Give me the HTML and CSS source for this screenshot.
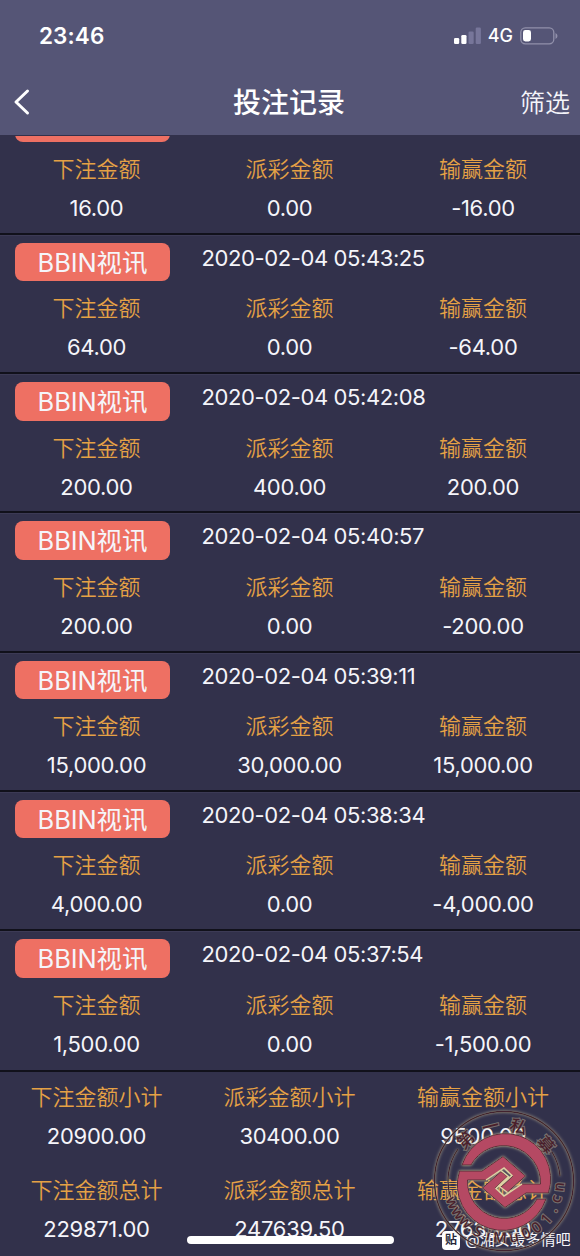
FILE: index.html
```html
<!DOCTYPE html>
<html lang="zh-CN">
<head>
<meta charset="utf-8">
<title>投注记录</title>
<link rel="stylesheet" href="styles.css">
</head>
<body>
<div class="screen">
  <header class="header">
    <div class="status">
      <span class="clock">23:46</span>
      <div class="indicators">
        <svg class="signal" width="28" height="18" viewBox="0 0 28 18"><rect x="0" y="11" width="5.2" height="6" rx="1.3" fill="#fff"/><rect x="7.3" y="8" width="5.2" height="9" rx="1.3" fill="#fff"/><rect x="14.5" y="4.5" width="5.2" height="12.5" rx="1.3" fill="#77769a"/><rect x="21.7" y="0.5" width="5.2" height="16.5" rx="1.3" fill="#77769a"/></svg>
        <span class="network">4G</span>
        <svg class="battery" width="38" height="18" viewBox="0 0 38 18"><rect x=".8" y=".8" width="33" height="16" rx="4.5" fill="none" stroke="#9190aa" stroke-width="1.3"/><rect x="3" y="3" width="8" height="11.5" rx="2.4" fill="#fff"/><path d="M35.5 6v6q2-1 2-3t-2-3z" fill="#9190aa"/></svg>
      </div>
    </div>
    <nav class="nav">
      <svg class="back" width="18" height="30" viewBox="0 0 18 30"><path d="M15.500 5 4 16l11.500 11" fill="none" stroke="#fff" stroke-width="3" stroke-linecap="round" stroke-linejoin="round"/></svg>
      <h1 class="title">投注记录</h1>
      <span class="filter">筛选</span>
    </nav>
  </header>
  <main class="list">
    <section class="record clipped">
      <div class="record-head"><span class="tag"></span></div>
      <div class="labels"><span>下注金额</span><span>派彩金额</span><span>输赢金额</span></div>
      <div class="values"><span>16.00</span><span>0.00</span><span>-16.00</span></div>
    </section>
    <section class="record">
      <div class="record-head"><span class="tag">BBIN视讯</span><time class="time">2020-02-04 05:43:25</time></div>
      <div class="labels"><span>下注金额</span><span>派彩金额</span><span>输赢金额</span></div>
      <div class="values"><span>64.00</span><span>0.00</span><span>-64.00</span></div>
    </section>
    <section class="record">
      <div class="record-head"><span class="tag">BBIN视讯</span><time class="time">2020-02-04 05:42:08</time></div>
      <div class="labels"><span>下注金额</span><span>派彩金额</span><span>输赢金额</span></div>
      <div class="values"><span>200.00</span><span>400.00</span><span>200.00</span></div>
    </section>
    <section class="record">
      <div class="record-head"><span class="tag">BBIN视讯</span><time class="time">2020-02-04 05:40:57</time></div>
      <div class="labels"><span>下注金额</span><span>派彩金额</span><span>输赢金额</span></div>
      <div class="values"><span>200.00</span><span>0.00</span><span>-200.00</span></div>
    </section>
    <section class="record">
      <div class="record-head"><span class="tag">BBIN视讯</span><time class="time">2020-02-04 05:39:11</time></div>
      <div class="labels"><span>下注金额</span><span>派彩金额</span><span>输赢金额</span></div>
      <div class="values"><span>15,000.00</span><span>30,000.00</span><span>15,000.00</span></div>
    </section>
    <section class="record">
      <div class="record-head"><span class="tag">BBIN视讯</span><time class="time">2020-02-04 05:38:34</time></div>
      <div class="labels"><span>下注金额</span><span>派彩金额</span><span>输赢金额</span></div>
      <div class="values"><span>4,000.00</span><span>0.00</span><span>-4,000.00</span></div>
    </section>
    <section class="record">
      <div class="record-head"><span class="tag">BBIN视讯</span><time class="time">2020-02-04 05:37:54</time></div>
      <div class="labels"><span>下注金额</span><span>派彩金额</span><span>输赢金额</span></div>
      <div class="values"><span>1,500.00</span><span>0.00</span><span>-1,500.00</span></div>
    </section>
  </main>
  <footer class="summary">
    <div class="total">
      <div class="labels"><span>下注金额小计</span><span>派彩金额小计</span><span>输赢金额小计</span></div>
      <div class="values"><span>20900.00</span><span>30400.00</span><span>9500.00</span></div>
    </div>
    <div class="total">
      <div class="labels"><span>下注金额总计</span><span>派彩金额总计</span><span>输赢金额总计</span></div>
      <div class="values"><span>229871.00</span><span>247639.50</span><span>27635.50</span></div>
    </div>
  </footer>
  <div class="home-bar"></div>
  <div class="credit"><span class="credit-icon">贴</span><span>@湘女最多情吧</span></div>
  <svg class="seal" width="150" height="150" viewBox="-75 -75 150 150">
    <defs>
      <filter id="glow" x="-20%" y="-20%" width="140%" height="140%"><feDropShadow dx="0" dy="0" stdDeviation="1.5" flood-color="#d8cba4" flood-opacity=".85"/></filter>
      <path id="half" d="M-44.500-11H-22L-1-25.500 21.500-6 3 10.500-3.500 5.500 9-6 0-14-18-2H-36.500A37 37 0 0 0 33 17H42A45 45 0 0 1-44.500-11Z"/>
    </defs>
    <g filter="url(#glow)">
      <circle r="69.500" fill="none" stroke="#42222d" stroke-width="1.400"/>
      <path d="M-53 18A56 56 0 0 1-46-32M48-29A56 56 0 0 1 56-5" fill="none" stroke="#42222d" stroke-width="1.300"/>
    </g>
    <g class="seal-text">
      <text transform="rotate(-43) translate(0 -50)">第</text>
      <text transform="rotate(-14) translate(0 -50)">一</text>
      <text transform="rotate(15) translate(0 -50)">私</text>
      <text transform="rotate(49) translate(0 -49)">募</text>
      <g class="seal-url">
        <text transform="rotate(67) translate(0 61)">w</text>
        <text transform="rotate(55) translate(0 61)">w</text>
        <text transform="rotate(43) translate(0 61)">w</text>
        <text transform="rotate(35) translate(0 61)">.</text>
        <text transform="rotate(27) translate(0 62)">S</text>
        <text transform="rotate(16) translate(0 62)">i</text>
        <text transform="rotate(4) translate(0 62)">M</text>
        <text transform="rotate(-10) translate(0 62)">u</text>
        <text transform="rotate(-23) translate(0 62)">0</text>
        <text transform="rotate(-35) translate(0 62)">0</text>
        <text transform="rotate(-48) translate(0 62)">1</text>
        <text transform="rotate(-60) translate(0 61)">.</text>
        <text transform="rotate(-71) translate(0 60)">c</text>
        <text transform="rotate(-84) translate(0 60)">n</text>
      </g>
    </g>
    <g filter="url(#glow)" fill="#b54863" stroke="#5a2c38" stroke-width="1" transform="translate(0 1)">
      <use href="#half"/>
      <use href="#half" transform="rotate(180)"/>
    </g>
    <path d="M-18-1 0-13 8-5.500-4.500 5.500 3.500 11.500M18 3 0 15-8 7.500 4.500-4.500-3-10.500" fill="none" stroke="#dfd2a4" stroke-width="1.500"/>
  </svg>
</div>
</body>
</html>
```
FILE: styles.css
```css
* { box-sizing: border-box; }
body { margin: 0; background: #32314b; }
.screen {
  position: relative;
  width: 580px;
  height: 1256px;
  overflow: hidden;
  background: #32314b;
  color: #f5f5fa;
  font-family: Inter, "Noto Sans CJK SC", sans-serif;
}
.header { height: 135px; background: #555576; }
.status {
  height: 70px;
  padding: 1px 22px 0 39px;
  display: flex;
  align-items: center;
  justify-content: space-between;
}
.clock { font-size: 22.500px; font-weight: 600; letter-spacing: .1px; color: #fff; }
.indicators { display: flex; align-items: center; }
.network { margin: 0 7px 0 6px; font-size: 18px; font-weight: 500; color: #fff; }
.nav {
  height: 61px;
  padding: 0 10px 0 12px;
  display: grid;
  grid-template-columns: 77px 1fr 81px;
  align-items: center;
}
.title { margin: 0; font-size: 28px; font-weight: 500; text-align: center; color: #fff; }
.filter { font-size: 25px; font-weight: 350; text-align: right; }
.list { height: 935px; overflow: hidden; border-top: 1px solid #32314b; }
.record {
  height: 139.250px;
  padding-top: 8px;
  border-top: 2px solid #11111b;
  box-shadow: inset 0 1px #3c3a55;
}
.clipped { margin-top: -42.400px; }
.record-head { height: 47.400px; padding-left: 15px; display: flex; align-items: flex-start; }
.tag {
  width: 155px;
  height: 38.500px;
  border-radius: 8px;
  background: #ee7063;
  font-size: 25.500px;
  font-weight: 400;
  line-height: 40px;
  letter-spacing: -.1px;
  text-align: center;
}
.time { margin-left: 31.500px; font-size: 22px; line-height: 31px; letter-spacing: -.4px; }
.labels, .values { display: grid; grid-template-columns: 193px 193px 194px; text-align: center; }
.labels { height: 37px; color: #e5a145; font-size: 22px; line-height: 36px; font-weight: 350; }
.values { height: 41px; font-size: 22px; line-height: 41px; letter-spacing: -.3px; }
.summary { padding-top: 7px; border-top: 2px solid #11111b; }
.total { height: 93px; }
.home-bar {
  position: absolute;
  left: 187px;
  top: 1236px;
  width: 207px;
  height: 8px;
  border-radius: 4px;
  background: #fff;
}
.credit {
  position: absolute;
  left: 442px;
  top: 1230px;
  display: flex;
  align-items: center;
  gap: 5px;
  font-size: 15.200px;
  line-height: 20px;
  white-space: nowrap;
}
.credit-icon {
  width: 18px;
  height: 19px;
  border-radius: 4px;
  background: #fff;
  color: #262638;
  font-size: 12px;
  font-weight: 700;
  line-height: 18px;
  text-align: center;
}
.seal { position: absolute; left: 429px; top: 1105.500px; }
.seal-text {
  fill: #4a1f2b;
  stroke: rgba(205, 190, 155, .45);
  stroke-width: 2.200px;
  paint-order: stroke;
  font-size: 17px;
  font-weight: 500;
  text-anchor: middle;
}
.seal-url { font-family: "Noto Sans", sans-serif; font-size: 15px; font-weight: 500; }
```
